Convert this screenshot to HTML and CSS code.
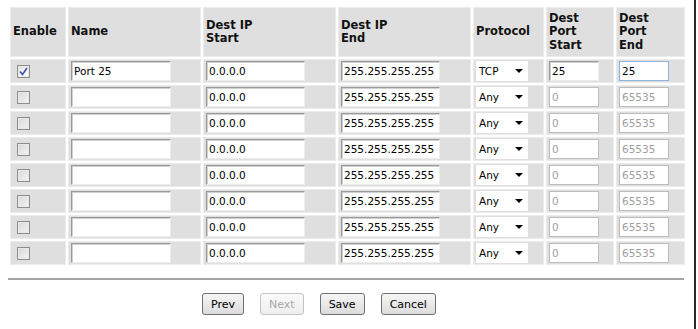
FILE: index.html
```html
<!DOCTYPE html>
<html lang="en">
<head>
<meta charset="UTF-8" />
<title>Outbound Filter</title>
<link rel="stylesheet" href="styles.css">
</head>
<body>
<div class="page">

  <table class="rules">
    <colgroup>
      <col class="c-enable"><col class="c-name"><col class="c-ip"><col class="c-ip">
      <col class="c-proto"><col class="c-port"><col class="c-port2">
    </colgroup>
    <thead>
      <tr>
        <th>Enable</th>
        <th>Name</th>
        <th>Dest IP<br>Start</th>
        <th>Dest IP<br>End</th>
        <th>Protocol</th>
        <th>Dest<br>Port<br>Start</th>
        <th>Dest<br>Port<br>End</th>
      </tr>
    </thead>
    <tbody>
      <tr>
        <td><span class="check on"><svg width="9" height="9" viewBox="0 0 9 9"><path d="M1 4.5 L3.5 7.5 L8 1" fill="none" stroke="#3a52a8" stroke-width="1.6"/></svg></span></td>
        <td><input class="txt name" type="text" value="Port 25"></td>
        <td><input class="txt ip" type="text" value="0.0.0.0"></td>
        <td><input class="txt ip" type="text" value="255.255.255.255"></td>
        <td><span class="sel">TCP</span></td>
        <td><input class="txt port" type="text" value="25"></td>
        <td><input class="txt port focus" type="text" value="25"></td>
      </tr>
      <tr>
        <td><span class="check"></span></td>
        <td><input class="txt name" type="text" value=""></td>
        <td><input class="txt ip" type="text" value="0.0.0.0"></td>
        <td><input class="txt ip" type="text" value="255.255.255.255"></td>
        <td><span class="sel">Any</span></td>
        <td><input class="txt port" type="text" value="0" disabled></td>
        <td><input class="txt port" type="text" value="65535" disabled></td>
      </tr>
      <tr>
        <td><span class="check"></span></td>
        <td><input class="txt name" type="text" value=""></td>
        <td><input class="txt ip" type="text" value="0.0.0.0"></td>
        <td><input class="txt ip" type="text" value="255.255.255.255"></td>
        <td><span class="sel">Any</span></td>
        <td><input class="txt port" type="text" value="0" disabled></td>
        <td><input class="txt port" type="text" value="65535" disabled></td>
      </tr>
      <tr>
        <td><span class="check"></span></td>
        <td><input class="txt name" type="text" value=""></td>
        <td><input class="txt ip" type="text" value="0.0.0.0"></td>
        <td><input class="txt ip" type="text" value="255.255.255.255"></td>
        <td><span class="sel">Any</span></td>
        <td><input class="txt port" type="text" value="0" disabled></td>
        <td><input class="txt port" type="text" value="65535" disabled></td>
      </tr>
      <tr>
        <td><span class="check"></span></td>
        <td><input class="txt name" type="text" value=""></td>
        <td><input class="txt ip" type="text" value="0.0.0.0"></td>
        <td><input class="txt ip" type="text" value="255.255.255.255"></td>
        <td><span class="sel">Any</span></td>
        <td><input class="txt port" type="text" value="0" disabled></td>
        <td><input class="txt port" type="text" value="65535" disabled></td>
      </tr>
      <tr>
        <td><span class="check"></span></td>
        <td><input class="txt name" type="text" value=""></td>
        <td><input class="txt ip" type="text" value="0.0.0.0"></td>
        <td><input class="txt ip" type="text" value="255.255.255.255"></td>
        <td><span class="sel">Any</span></td>
        <td><input class="txt port" type="text" value="0" disabled></td>
        <td><input class="txt port" type="text" value="65535" disabled></td>
      </tr>
      <tr>
        <td><span class="check"></span></td>
        <td><input class="txt name" type="text" value=""></td>
        <td><input class="txt ip" type="text" value="0.0.0.0"></td>
        <td><input class="txt ip" type="text" value="255.255.255.255"></td>
        <td><span class="sel">Any</span></td>
        <td><input class="txt port" type="text" value="0" disabled></td>
        <td><input class="txt port" type="text" value="65535" disabled></td>
      </tr>
      <tr>
        <td><span class="check"></span></td>
        <td><input class="txt name" type="text" value=""></td>
        <td><input class="txt ip" type="text" value="0.0.0.0"></td>
        <td><input class="txt ip" type="text" value="255.255.255.255"></td>
        <td><span class="sel">Any</span></td>
        <td><input class="txt port" type="text" value="0" disabled></td>
        <td><input class="txt port" type="text" value="65535" disabled></td>
      </tr>
    </tbody>
  </table>

  <div class="divider"></div>

  <div class="buttons">
    <button class="btn">Prev</button>
    <button class="btn" disabled>Next</button>
    <button class="btn">Save</button>
    <button class="btn">Cancel</button>
  </div>

</div>
</body>
</html>
```

FILE: styles.css
```css
body {
  margin: 0;
  background: #fff;
  font-family: 'DejaVu Sans', Verdana, sans-serif;
  font-size: 10px;
  color: #000;
}

.page {
  width: 696px;
  height: 329px;
  border-right: 2px solid #2a2a2a;
  padding-top: 5px;
  box-sizing: border-box;
}

/* Tabla de reglas */
.rules {
  margin-left: 8px;
  border-collapse: separate;
  border-spacing: 2px;
  table-layout: fixed;
  width: 679px;
}
.c-enable { width: 56px; }
.c-name { width: 133px; }
.c-ip { width: 133px; }
.c-proto { width: 71px; }
.c-port { width: 68px; }
.c-port2 { width: 69px; }

.rules th, .rules td {
  background: #dfdfdf;
  border: 1px solid #ececec;
  padding: 0 0 0 2px;
  text-align: left;
  vertical-align: middle;
}
.rules th {
  height: 48px;
  font-size: 11.5px;
  font-weight: bold;
  line-height: 13.5px;
  color: #111;
}
.rules td {
  height: 22px;
}
.rules td:first-child { padding-left: 6px; }

/* Campos */
.txt {
  display: block;
  box-sizing: border-box;
  height: 20px;
  margin: 0;
  padding: 0 2px;
  font-family: 'DejaVu Sans', Verdana, sans-serif;
  font-size: 10.5px;
  color: #000;
  background: #fff;
  border: 1px solid;
  border-color: #9a9a9a #ededed #ededed #9a9a9a;
  box-shadow: inset 1px 1px 0 #d0d0d0;
  outline: none;
}
.txt.name { width: 100px; }
.txt.ip { width: 99px; }
.txt.port { width: 50px; }
.txt:disabled {
  color: #a0a0a0;
  border: 1px solid #bdbdbd;
  box-shadow: none;
  background: #fff;
}
.txt.focus {
  border: 1px solid #8fb3da;
  box-shadow: none;
}

.sel {
  display: block;
  position: relative;
  width: 52px;
  height: 20px;
  box-sizing: border-box;
  padding-left: 3px;
  line-height: 20px;
  font-size: 10.5px;
  background: #fff;
  color: #000;
}
.sel::after {
  content: '';
  position: absolute;
  right: 5px;
  top: 8px;
  border-left: 4px solid transparent;
  border-right: 4px solid transparent;
  border-top: 4px solid #000;
}

.check {
  display: flex;
  align-items: center;
  justify-content: center;
  width: 13px;
  height: 13px;
  box-sizing: border-box;
  border: 1px solid #8e8e8e;
  background: linear-gradient(135deg, #d8d8d8, #f4f4f4);
  box-shadow: inset 0 0 0 1px #e8e8e8;
}
.check.on {
  background: linear-gradient(135deg, #e4e4e4, #ffffff);
}

.divider {
  margin: 11px 10px 0 8px;
  border-top: 2px solid #a4a4a4;
}

/* Botones */
.buttons {
  display: flex;
  gap: 16px;
  padding: 13px 0 0 202px;
}
.btn {
  height: 22px;
  padding: 0 8px;
  font-family: 'DejaVu Sans', Verdana, sans-serif;
  font-size: 11px;
  color: #000;
  background: linear-gradient(#f6f6f6, #dcdcdc);
  border: 1px solid #707070;
  border-radius: 3px;
}
.btn:disabled {
  color: #a8a8a8;
  border-color: #c4c4c4;
  background: linear-gradient(#fafafa, #eeeeee);
}
```
